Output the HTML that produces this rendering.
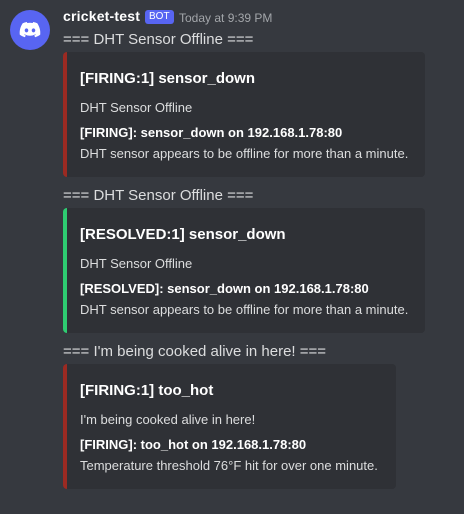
<!DOCTYPE html>
<html><head><style>
body{margin:0;width:464px;height:514px;background:#36393f;font-family:"Liberation Sans",sans-serif;position:relative;overflow:hidden;color:#dcddde}
.a{position:absolute;white-space:nowrap}
.msg{font-size:15px;color:#dcddde;left:63px}
.emb{position:absolute;left:63px;background:#2f3136;border-radius:4px;border-left:4px solid #9b2a22}
.t{font-size:15px;font-weight:bold;color:#fff}
.d{font-size:13px;color:#dcddde}
.f{font-size:13px;font-weight:bold;color:#fff}
</style></head><body>
<div class="a" style="left:10px;top:10px;width:40px;height:40px;border-radius:50%;background:#5865f2"></div>
<svg class="a" style="left:18px;top:18px" width="24" height="24" viewBox="0 0 24 24"><path fill="#fff" d="M19.3 5.3A16.6 16.6 0 0 0 15.2 4l-.5 1a15.4 15.4 0 0 0-5.4 0L8.8 4a16.6 16.6 0 0 0-4.1 1.3C2.1 9.2 1.4 13 1.8 16.7a16.7 16.7 0 0 0 5 2.5l1.1-1.7a10.8 10.8 0 0 1-1.7-.8l.4-.3a11.9 11.9 0 0 0 10.8 0l.4.3c-.5.3-1.1.6-1.7.8l1.1 1.7a16.7 16.7 0 0 0 5-2.5c.5-4.3-.8-8-2.9-11.4zM8.5 14.4c-1 0-1.8-.9-1.8-2s.8-2 1.8-2 1.8.9 1.8 2-.8 2-1.8 2zm7 0c-1 0-1.8-.9-1.8-2s.8-2 1.8-2 1.8.9 1.8 2-.8 2-1.8 2z"/></svg>
<div class="a" style="left:63px;top:8px;font-size:14px;font-weight:bold;color:#fff;letter-spacing:0.2px">cricket-test</div>
<div class="a" style="left:145px;top:10px;background:#5865f2;color:#fff;font-size:10px;padding:1px 4px;border-radius:3px;line-height:12px">BOT</div>
<div class="a" style="left:179px;top:11px;font-size:12px;color:#a3a6aa">Today at 9:39 PM</div>

<div class="a msg" style="top:31px">=== DHT Sensor Offline ===</div>
<div class="emb" style="top:52px;width:358px;height:125px">
<div class="a t" style="left:13px;top:18px">[FIRING:1] sensor_down</div>
<div class="a d" style="left:13px;top:48px">DHT Sensor Offline</div>
<div class="a f" style="left:13px;top:73px">[FIRING]: sensor_down on 192.168.1.78:80</div>
<div class="a d" style="left:13px;top:94px">DHT sensor appears to be offline for more than a minute.</div>
</div>

<div class="a msg" style="top:187px">=== DHT Sensor Offline ===</div>
<div class="emb" style="top:208px;width:358px;height:125px;border-left-color:#2ecc71">
<div class="a t" style="left:13px;top:18px">[RESOLVED:1] sensor_down</div>
<div class="a d" style="left:13px;top:48px">DHT Sensor Offline</div>
<div class="a f" style="left:13px;top:73px">[RESOLVED]: sensor_down on 192.168.1.78:80</div>
<div class="a d" style="left:13px;top:94px">DHT sensor appears to be offline for more than a minute.</div>
</div>

<div class="a msg" style="top:343px">=== I'm being cooked alive in here! ===</div>
<div class="emb" style="top:364px;width:329px;height:125px">
<div class="a t" style="left:13px;top:18px">[FIRING:1] too_hot</div>
<div class="a d" style="left:13px;top:48px">I'm being cooked alive in here!</div>
<div class="a f" style="left:13px;top:73px">[FIRING]: too_hot on 192.168.1.78:80</div>
<div class="a d" style="left:13px;top:94px">Temperature threshold 76°F hit for over one minute.</div>
</div>
</body></html>
